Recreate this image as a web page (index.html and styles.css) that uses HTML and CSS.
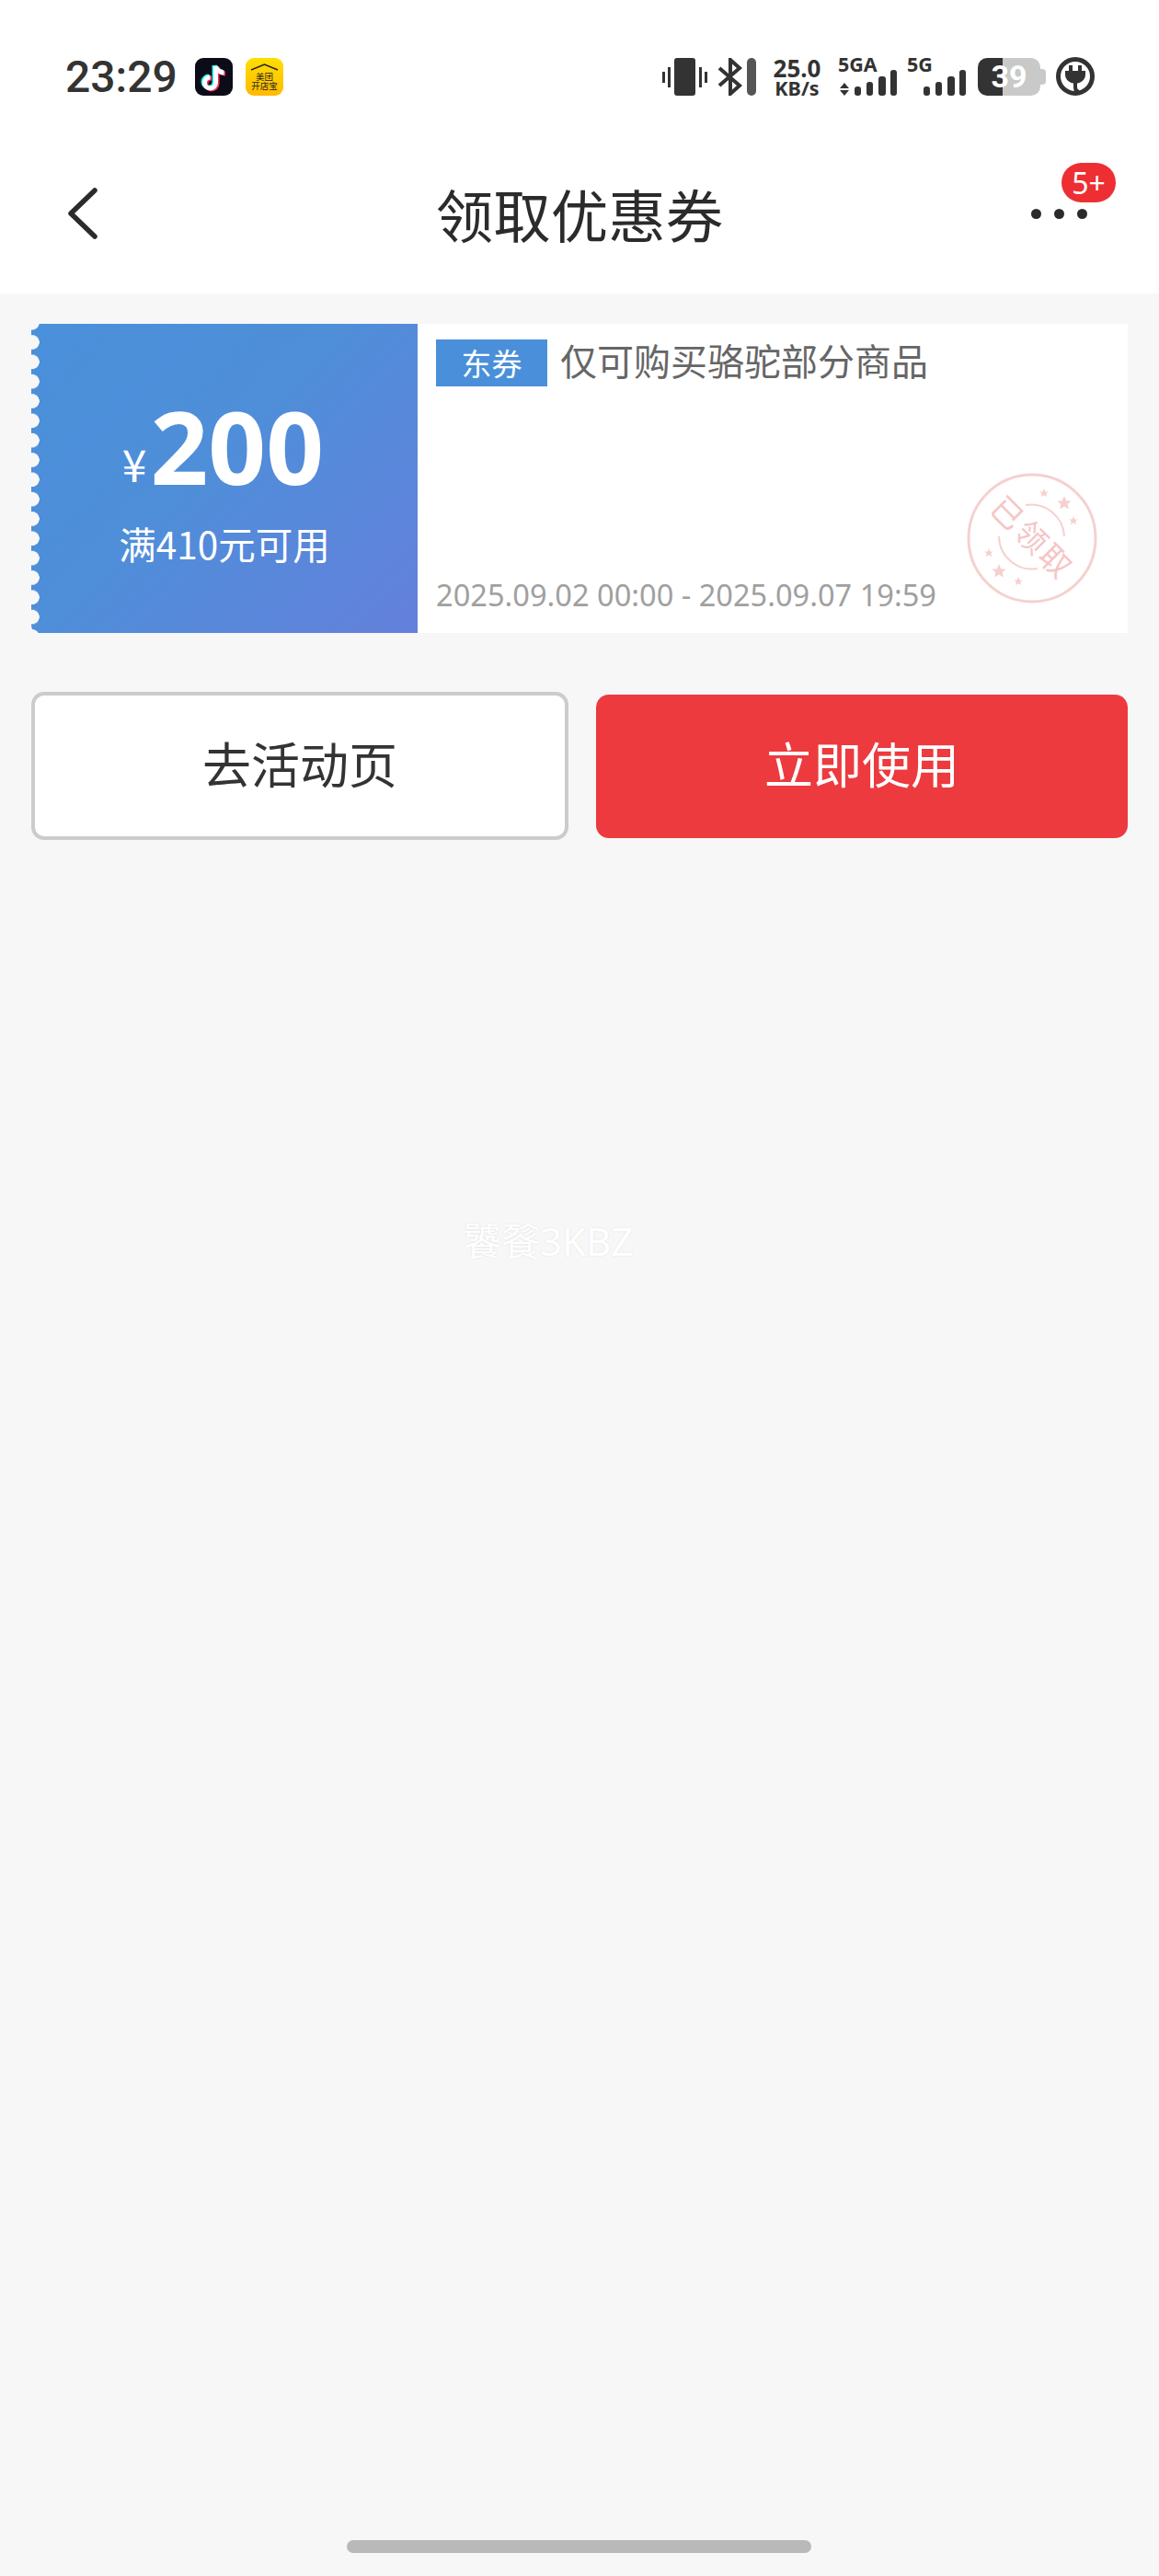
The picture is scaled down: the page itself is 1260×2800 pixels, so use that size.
FILE: index.html
```html
<!DOCTYPE html>
<html lang="zh-CN">
<head>
    <meta charset="UTF-8">
    <meta name="viewport" content="width=device-width, initial-scale=1.0">
    <title>领取优惠券</title>
    <link rel="stylesheet" href="styles.css">
</head>
<body>
    <header class="top">
        <div class="status-bar">
            <div class="status-left">
                <span class="time">23:29</span>
                <svg class="app-icon" viewBox="0 0 41 41">
                    <rect width="41" height="41" rx="9" fill="#0c0c18"/>
                    <g fill="none" stroke-width="5">
                        <path d="M21 8V26A6 6 0 1 1 15 20M21 8C22 12 26 15 30 15" stroke="#25f4ee"/>
                        <path d="M24 10V28A6 6 0 1 1 18 22M24 10C25 14 29 17 33 17" stroke="#fe2c55"/>
                        <path d="M22.500 9V27A6 6 0 1 1 16.500 21M22.500 9C23.500 13 27.500 16 31.500 16" stroke="#fff"/>
                    </g>
                </svg>
                <div class="app-icon shop-icon">
                    <svg viewBox="0 0 41 8" class="shop-roof"><path d="M6 7L20.500 1L35 7" fill="none" stroke="#222" stroke-width="1.500"/></svg>
                    <span>美团</span>
                    <span>开店宝</span>
                </div>
            </div>
            <div class="status-right">
                <svg class="ic-vibrate" width="49" height="41" viewBox="0 0 49 41" fill="#333">
                    <rect x="13" width="23" height="41" rx="3"/>
                    <rect y="15" width="3" height="12"/>
                    <rect x="6" y="10" width="3" height="22"/>
                    <rect x="40" y="10" width="3" height="22"/>
                    <rect x="46" y="15" width="3" height="12"/>
                </svg>
                <svg class="ic-bt" width="42" height="41" viewBox="0 0 42 41">
                    <path d="M2 11L24 30L14 39V2L24 11L2 30" fill="none" stroke="#333" stroke-width="4"/>
                    <rect x="32" width="10" height="41" rx="5" fill="#555"/>
                </svg>
                <div class="speed">
                    <span class="speed-num">25.0</span>
                    <span class="speed-unit">KB/s</span>
                </div>
                <svg class="ic-signal" width="64" height="41" viewBox="0 0 64 41" fill="#333">
                    <text class="signal-label" x="0" y="15">5GA</text>
                    <path d="M7 27L12 33H2ZM7 41L2 35H12Z"/>
                    <rect x="18" y="31" width="7" height="10" rx="3"/>
                    <rect x="31" y="26" width="7" height="15" rx="3"/>
                    <rect x="44" y="20" width="8" height="21" rx="3"/>
                    <rect x="57" y="13" width="7" height="28" rx="3"/>
                </svg>
                <svg class="ic-signal" width="64" height="41" viewBox="0 0 64 41" fill="#333">
                    <text class="signal-label" x="0" y="15">5G</text>
                    <rect x="18" y="31" width="7" height="10" rx="3"/>
                    <rect x="31" y="26" width="7" height="15" rx="3"/>
                    <rect x="44" y="20" width="8" height="21" rx="3"/>
                    <rect x="57" y="13" width="7" height="28" rx="3"/>
                </svg>
                <div class="battery">39</div>
                <svg class="ic-plug" width="42" height="42" viewBox="0 0 42 42">
                    <circle cx="21" cy="21" r="18.500" fill="none" stroke="#333" stroke-width="5"/>
                    <path d="M10 15H32V19A11 10 0 0 1 10 19Z" fill="#333"/>
                    <rect x="14" y="9" width="4" height="8" fill="#333"/>
                    <rect x="24" y="9" width="4" height="8" fill="#333"/>
                    <path d="M21 28V33Q21 37 25 38" fill="none" stroke="#333" stroke-width="4"/>
                </svg>
            </div>
        </div>
        <nav class="nav">
            <svg class="back" width="32" height="56" viewBox="0 0 32 56">
                <path d="M29 3L3 28L29 53" fill="none" stroke="#2b2b2b" stroke-width="5.500" stroke-linecap="round" stroke-linejoin="round"/>
            </svg>
            <h1 class="nav-title">领取优惠券</h1>
            <div class="more">
                <i class="dot"></i><i class="dot"></i><i class="dot"></i>
                <span class="badge">5+</span>
            </div>
        </nav>
    </header>

    <main class="content">
        <section class="coupon">
            <div class="coupon-left">
                <div class="amount"><span class="yen">¥</span><span class="value">200</span></div>
                <div class="limit">满410元可用</div>
            </div>
            <div class="coupon-right">
                <div class="coupon-head">
                    <span class="tag">东券</span>
                    <span class="coupon-name">仅可购买骆驼部分商品</span>
                </div>
                <div class="coupon-date">2025.09.02 00:00 - 2025.09.07 19:59</div>
                <!-- received stamp -->
                <svg class="stamp" width="150" height="150" viewBox="0 0 150 150">
                    <defs>
                        <polygon id="star" points="0,-10 2.900,-3.100 9.500,-3.100 4.700,1.200 5.900,8.100 0,4.500 -5.900,8.100 -4.700,1.200 -9.500,-3.100 -2.900,-3.100"/>
                    </defs>
                    <circle cx="75" cy="75" r="69" fill="none" stroke="#f6d0d0" stroke-width="3"/>
                    <path d="M68 39A36 36 0 0 1 110 73M39 73A36 36 0 0 0 81 108" fill="none" stroke="#f6d0d0" stroke-width="2"/>
                    <g fill="#f6d0d0">
                        <use href="#star" transform="translate(88 26) scale(.5)"/>
                        <use href="#star" transform="translate(110 37) scale(.8)"/>
                        <use href="#star" transform="translate(120 56) scale(.5)"/>
                        <use href="#star" transform="translate(28 91) scale(.5)"/>
                        <use href="#star" transform="translate(39 111) scale(.8)"/>
                        <use href="#star" transform="translate(60 122) scale(.5)"/>
                    </g>
                    <text class="stamp-text" x="75" y="87" text-anchor="middle" transform="rotate(45 75 75)">已领取</text>
                </svg>
            </div>
        </section>

        <div class="actions">
            <button class="btn btn-outline">去活动页</button>
            <button class="btn btn-primary">立即使用</button>
        </div>

        <div class="mark">饕餮3KBZ</div>
    </main>

    <div class="home-bar"></div>
</body>
</html>
```

FILE: styles.css
```css
* {
    box-sizing: border-box;
}

body {
    margin: 0;
    height: 2800px;
    display: flex;
    flex-direction: column;
    background-color: #f7f7f7;
    font-family: "Noto Sans", "Noto Sans CJK SC", sans-serif;
    color: #2b2b2b;
    overflow: hidden;
}

.top {
    background-color: #fff;
    height: 319px;
}

/* Status bar */
.status-bar {
    height: 166px;
    padding: 0 70px 0 71px;
    display: flex;
    justify-content: space-between;
    align-items: center;
}

.status-left {
    display: flex;
    align-items: center;
}

.time {
    font-family: Roboto, sans-serif;
    font-weight: 500;
    font-size: 48px;
    line-height: 41px;
    color: #333;
    width: 141px;
}

.app-icon {
    width: 41px;
    height: 41px;
    display: block;
}

.shop-icon {
    margin-left: 14px;
    border-radius: 9px;
    background: linear-gradient(180deg, #ffdf00, #ffb900);
    display: flex;
    flex-direction: column;
    align-items: center;
    font-family: "Noto Sans CJK SC", sans-serif;
    font-size: 9.500px;
    line-height: 10px;
    color: #222;
}

.shop-roof {
    width: 41px;
    height: 8px;
    margin-top: 6px;
    margin-bottom: 1px;
    flex: none;
}

.status-right {
    display: flex;
    align-items: center;
    gap: 11px;
}

.ic-vibrate,
.ic-bt,
.ic-plug {
    display: block;
}

.ic-signal {
    display: block;
    overflow: visible;
}

.speed {
    display: flex;
    flex-direction: column;
    align-items: center;
    width: 51px;
    margin: 0 8px;
    font-weight: 700;
    color: #333;
}

.speed-num {
    font-size: 26px;
    line-height: 25px;
}

.speed-unit {
    font-size: 21.500px;
    line-height: 17px;
}

.signal-label {
    font-family: "Noto Sans", sans-serif;
    font-weight: 700;
    font-size: 21.500px;
}

.battery {
    position: relative;
    width: 68px;
    height: 41px;
    margin: 0 6px 0 2px;
    border-radius: 10px;
    background: linear-gradient(90deg, #333 27px, #c9c9c9 27px);
    color: #fff;
    font-family: Roboto, sans-serif;
    font-weight: 700;
    font-size: 34px;
    line-height: 41px;
    text-align: center;
}

.battery::after {
    content: "";
    position: absolute;
    left: 68px;
    top: 12px;
    width: 6px;
    height: 17px;
    border-radius: 0 4px 4px 0;
    background-color: #c9c9c9;
}

/* Title row */
.nav {
    height: 132px;
    padding: 0 46px;
    display: grid;
    grid-template-columns: 1fr auto 1fr;
    align-items: center;
}

.back {
    display: block;
    margin-left: 28px;
}

.nav-title {
    margin: 0;
    font-weight: 400;
    font-size: 62.500px;
    line-height: 80px;
    font-family: "Noto Sans CJK SC", sans-serif;
}

.more {
    position: relative;
    justify-self: end;
    display: flex;
    gap: 14px;
    margin-right: 32px;
}

.dot {
    width: 11px;
    height: 11px;
    border-radius: 50%;
    background-color: #2b2b2b;
}

.badge {
    position: absolute;
    left: 33px;
    top: -50px;
    width: 59px;
    height: 43px;
    border-radius: 22px;
    background-color: #ed2f33;
    color: #fff;
    font-size: 32px;
    line-height: 43px;
    text-align: center;
}

/* Coupon card */
.content {
    position: relative;
    flex: 1;
    padding: 33px 34px 0;
}

.coupon {
    display: flex;
    height: 336px;
    background-color: #fff;
}

.coupon-left {
    position: relative;
    width: 420px;
    display: flex;
    flex-direction: column;
    align-items: center;
    border-radius: 8px 0 0 8px;
    background: linear-gradient(135deg, #4a90da 0%, #4f8ed9 45%, #6480dc 100%);
    color: #fff;
}

/* scalloped left edge */
.coupon-left::before {
    content: "";
    position: absolute;
    left: 0;
    top: 0;
    bottom: 0;
    width: 10px;
    background: radial-gradient(circle at 1px 50%, #f7f7f7 7.500px, transparent 8px) 0 9.330px / 10px 21.330px repeat-y;
}

.amount {
    display: flex;
    align-items: baseline;
    margin-top: 74px;
    margin-left: -3px;
    height: 116px;
    line-height: 116px;
}

.yen {
    font-size: 48px;
    font-family: "Noto Sans CJK SC", sans-serif;
    margin-right: 4px;
    position: relative;
    top: -3px;
}

.value {
    font-size: 110px;
    font-weight: 700;
}

.limit {
    margin-top: 24px;
    font-size: 40.500px;
    line-height: 50px;
    font-family: "Noto Sans CJK SC", sans-serif;
}

.coupon-right {
    position: relative;
    flex: 1;
    padding: 17px 20px 0;
}

.coupon-head {
    display: flex;
    align-items: center;
}

.tag {
    width: 121px;
    height: 51px;
    background-color: #4a8fd9;
    color: #fff;
    font-family: "Noto Sans CJK SC", sans-serif;
    font-size: 33px;
    line-height: 51px;
    text-align: center;
}

.coupon-name {
    margin-left: 14px;
    color: #666;
    font-family: "Noto Sans CJK SC", sans-serif;
    font-size: 40px;
    line-height: 51px;
    position: relative;
    top: -3px;
}

.coupon-date {
    margin-top: 204px;
    color: #a0a0a0;
    font-size: 32.600px;
    line-height: 46px;
}

.stamp {
    position: absolute;
    right: 29px;
    bottom: 28px;
}

.stamp-text {
    fill: #f5c6c6;
    font-family: "Noto Sans CJK SC", sans-serif;
    font-size: 34px;
    letter-spacing: 3px;
}

/* Buttons */
.actions {
    display: flex;
    gap: 30px;
    margin-top: 64px;
    align-items: center;
}

.btn {
    font-family: "Noto Sans CJK SC", sans-serif;
    font-size: 53px;
    border-radius: 14px;
    padding: 0 0 8px;
}

.btn-outline {
    width: 584px;
    height: 161px;
    border: 4px solid #ccc;
    background-color: #fff;
    color: #333;
}

.btn-primary {
    flex: 1;
    height: 156px;
    border: none;
    background-color: #ed3a3e;
    color: #fff;
}

.mark {
    position: absolute;
    left: 503px;
    top: 1005px;
    color: #fff;
    font-size: 42px;
    line-height: 50px;
    font-family: "Noto Sans", "Noto Sans CJK SC", sans-serif;
    text-shadow: 0 0 2px #dedede;
}

.home-bar {
    position: absolute;
    left: 377px;
    top: 2761px;
    width: 505px;
    height: 14px;
    border-radius: 7px;
    background-color: #b9b9b9;
}
```
